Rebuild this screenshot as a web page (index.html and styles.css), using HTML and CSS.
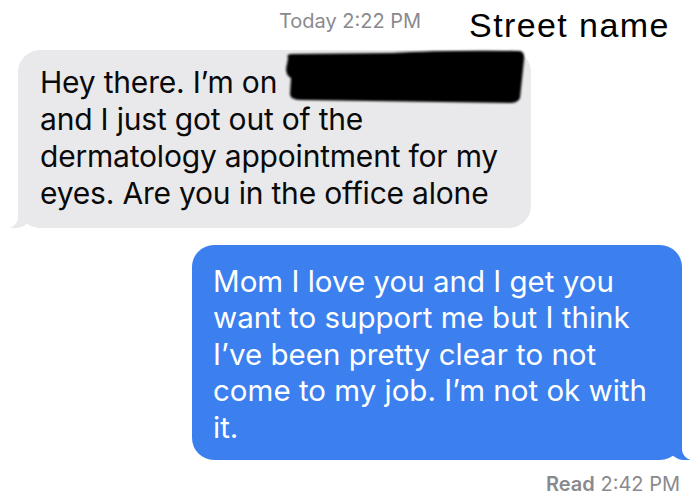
FILE: index.html
```html
<!DOCTYPE html>
<html>
<head>
<meta charset="utf-8">
<link rel="stylesheet" href="styles.css">
</head>
<body>
<div class="thread">
  <div class="header">
    <span></span>
    <span class="stamp">Today 2:22 PM</span>
    <span class="label">Street name</span>
  </div>
  <div class="bubble incoming">
    <p>Hey there. I’m on<br>and I just got out of the<br>dermatology appointment for my<br>eyes. Are you in the office alone</p>
    <svg class="redact" width="250" height="62" viewBox="0 0 250 62">
      <defs><filter id="soft"><feGaussianBlur stdDeviation="1.2"/></filter></defs>
      <path filter="url(#soft)" d="M6 10 Q4 6 10 6 L110 5 Q160 2 238 3 Q243 4 242 12 L238 50 Q236 55 228 55 L20 52 Q8 52 8 46 L9 30 Q2 26 5 16 Z" fill="#000"/>
    </svg>
  </div>
  <div class="bubble outgoing">
    <p>Mom I love you and I get you<br>want to support me but I think<br>I’ve been pretty clear to not<br>come to my job. I’m not ok with<br>it.</p>
  </div>
  <div class="receipt"><b>Read</b> 2:42 PM</div>
</div>
</body>
</html>
```
FILE: styles.css
```css
html, body {
  margin: 0;
  padding: 0;
  background: #ffffff;
}
.thread {
  width: 700px;
  height: 498px;
  display: flex;
  flex-direction: column;
  font-family: Inter, "Noto Sans", sans-serif;
}
.header {
  display: grid;
  grid-template-columns: 1fr auto 1fr;
  align-items: start;
  height: 50px;
}
.stamp {
  color: #8a8a8e;
  font-size: 20px;
  line-height: 24px;
  padding-top: 9px;
}
.label {
  font-family: "Liberation Sans", Arial, sans-serif;
  font-size: 34px;
  line-height: 40px;
  letter-spacing: 1.4px;
  color: #000;
  padding-left: 48px;
  padding-top: 5px;
  white-space: nowrap;
}
.bubble {
  position: relative;
  border-radius: 22px;
}
.bubble p {
  margin: 0;
  white-space: nowrap;
}
.incoming {
  background: #e9e9eb;
  color: #0a0a0a;
  width: 513px;
  margin-left: 18px;
  padding: 14px 0 16px 22px;
  box-sizing: border-box;
}
.incoming p {
  font-size: 30px;
  line-height: 37px;
  letter-spacing: -0.2px;
}
.incoming::before {
  content: "";
  position: absolute;
  bottom: 0;
  left: -8px;
  width: 22px;
  height: 22px;
  background: #e9e9eb;
  border-bottom-right-radius: 16px;
}
.incoming::after {
  content: "";
  position: absolute;
  bottom: 0;
  left: -14px;
  width: 14px;
  height: 22px;
  background: #fff;
  border-bottom-right-radius: 11px;
}
.redact {
  position: absolute;
  left: 264px;
  top: -2px;
}
.outgoing {
  background: #3b80ee;
  color: #fff;
  width: 490px;
  margin-left: 192px;
  margin-top: 17px;
  padding: 17.5px 0 15px 21px;
  box-sizing: border-box;
}
.outgoing p {
  font-size: 29.5px;
  line-height: 36.5px;
}
.outgoing::before {
  content: "";
  position: absolute;
  bottom: 0;
  right: -8px;
  width: 22px;
  height: 22px;
  background: #3b80ee;
  border-bottom-left-radius: 16px;
}
.outgoing::after {
  content: "";
  position: absolute;
  bottom: 0;
  right: -14px;
  width: 14px;
  height: 22px;
  background: #fff;
  border-bottom-left-radius: 11px;
}
.receipt {
  align-self: flex-end;
  margin-right: 20px;
  margin-top: 12px;
  color: #8a8a8e;
  font-size: 20px;
  line-height: 24px;
}
.receipt b {
  font-weight: 600;
}
```
